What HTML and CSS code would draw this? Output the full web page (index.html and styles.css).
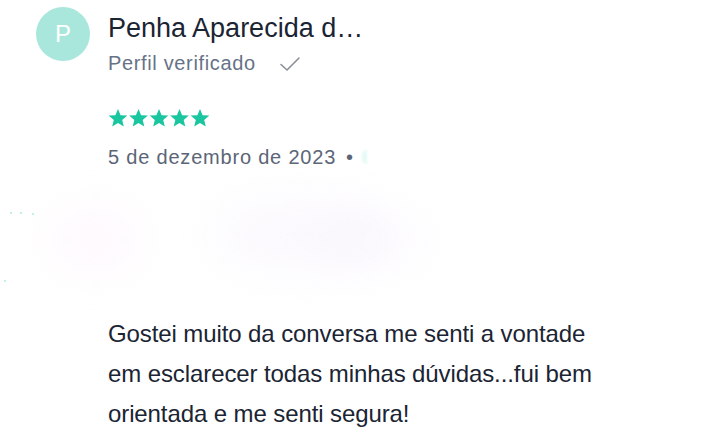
FILE: index.html
```html
<!DOCTYPE html>
<html lang="pt">
<head>
<meta charset="utf-8">
<link rel="stylesheet" href="styles.css">
</head>
<body>
<div class="review">
  <div class="header">
    <div class="avatar">P</div>
    <div class="who">
      <div class="name">Penha Aparecida d…</div>
      <div class="verified">Perfil verificado
        <svg class="check" width="22" height="16" viewBox="0 0 22 16"><path d="M2 8.5 L8 14 L20 2" fill="none" stroke="#8a8f98" stroke-width="1.6" stroke-linecap="round" stroke-linejoin="round"/></svg>
      </div>
    </div>
  </div>
  <div class="body">
    <div class="stars">
      <svg width="102" height="20" viewBox="0 0 102 20">
        <g fill="#19c6a0">
          <path id="s" d="M10 1 L12.6 7.2 L19.3 7.6 L14.2 11.9 L15.8 18.4 L10 14.9 L4.2 18.4 L5.8 11.9 L0.7 7.6 L7.4 7.2 Z"/>
          <use href="#s" x="20.5"/>
          <use href="#s" x="41"/>
          <use href="#s" x="61.5"/>
          <use href="#s" x="82"/>
        </g>
      </svg>
    </div>
    <div class="date">5 de dezembro de 2023<span class="bullet">•</span><span class="blurtag"></span></div>
    <div class="blurred">
      <span class="blob b1"></span>
      <span class="blob b2"></span>
      <span class="blob b3"></span>
      <span class="dot d1"></span>
      <span class="dot d2"></span>
      <span class="dot d3"></span>
      <span class="dot d4"></span>
    </div>
    <p class="text">Gostei muito da conversa me senti a vontade em esclarecer todas minhas dúvidas...fui bem orientada e me senti segura!</p>
  </div>
</div>
</body>
</html>
```
FILE: styles.css
```css
html, body {
  margin: 0;
  padding: 0;
  background: #fff;
}
body {
  font-family: "Liberation Sans", Arial, sans-serif;
  color: #1b2433;
  width: 702px;
  height: 445px;
  overflow: hidden;
}
.review {
  padding: 7px 0 0 36px;
}
.header {
  display: flex;
  align-items: flex-start;
  gap: 18px;
}
.avatar {
  width: 54px;
  height: 54px;
  border-radius: 50%;
  background: #a9e7dd;
  color: #fff;
  font-size: 24px;
  display: flex;
  align-items: center;
  justify-content: center;
}
.who {
  padding-top: 5px;
}
.name {
  font-size: 27px;
  line-height: 32px;
  color: #1b2433;
}
.verified {
  margin-top: 4px;
  font-size: 20px;
  line-height: 30px;
  letter-spacing: 0.65px;
  color: #677287;
  display: flex;
  align-items: center;
}
.check {
  margin-left: 23px;
  margin-top: 2px;
}
.body {
  padding-left: 72px;
}
.stars {
  margin-top: 30px;
  height: 20px;
}
.date {
  margin-top: 16px;
  font-size: 20px;
  line-height: 26px;
  letter-spacing: 0.8px;
  color: #5b6577;
  display: flex;
  align-items: center;
}
.bullet {
  margin-left: 10px;
}
.blurtag {
  display: inline-block;
  margin-left: 8px;
  width: 5px;
  height: 14px;
  border-radius: 7px 0 0 7px;
  background: rgba(170, 240, 225, 0.3);
  filter: blur(1px);
}
.blurred {
  position: relative;
  height: 144px;
  margin-left: -108px;
}
.blob {
  position: absolute;
  border-radius: 50%;
  filter: blur(22px);
}
.b1 {
  left: 50px; top: 40px; width: 90px; height: 60px;
  background: rgba(252, 232, 247, 0.3);
}
.b2 {
  left: 210px; top: 25px; width: 180px; height: 80px;
  background: rgba(244, 238, 250, 0.35);
}
.b3 {
  left: 320px; top: 45px; width: 110px; height: 50px;
  background: rgba(246, 240, 251, 0.3);
}
.dot {
  position: absolute;
  width: 2px;
  height: 2px;
  background: rgba(120, 220, 200, 0.45);
}
.d1 { left: 10px; top: 42px; }
.d2 { left: 20px; top: 42px; }
.d3 { left: 32px; top: 43px; }
.d4 { left: 4px; top: 110px; }
.text {
  margin: 0;
  font-size: 24px;
  line-height: 40px;
  letter-spacing: -0.1px;
  width: 495px;
  color: #1b2433;
}
```
